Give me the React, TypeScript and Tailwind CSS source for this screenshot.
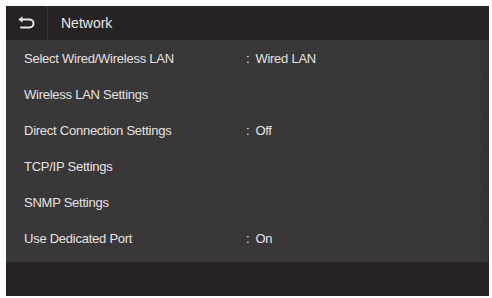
const rows = [
  { label: "Select Wired/Wireless LAN", value: "Wired LAN" },
  { label: "Wireless LAN Settings" },
  { label: "Direct Connection Settings", value: "Off" },
  { label: "TCP/IP Settings" },
  { label: "SNMP Settings" },
  { label: "Use Dedicated Port", value: "On" },
];

function BackIcon() {
  return (
    <svg width="20" height="16" viewBox="0 0 20 16" fill="none">
      <path
        d="M3 4.5h9.5a4 4 0 0 1 0 8H4"
        stroke="#e8e6e6"
        strokeWidth="2"
        strokeLinecap="round"
      />
      <path d="M1.5 4.5L5.5 1.2v6.6z" fill="#e8e6e6" />
    </svg>
  );
}

export default function App() {
  return (
    <div className="h-[298px] w-[492px] bg-white p-[6px] pr-[3px] pb-[2px]">
      <div
        className="flex h-[290px] w-[483px] flex-col bg-[#3a3738] text-[#e4e2e2]"
        style={{ fontFamily: '"Liberation Sans", Arial, sans-serif' }}
      >
        <div className="flex h-[34px] items-center bg-[#272324]">
          <div className="flex h-full w-[42px] items-center justify-center border-r border-[#3a3637]">
            <BackIcon />
          </div>
          <span className="ml-[13px] text-[14px] text-[#e8e6e6]">Network</span>
        </div>
        <div className="flex-1 border-r-[8px] border-[#363334] pt-[1px]">
          {rows.map((row) => (
            <div
              key={row.label}
              className="flex h-[36px] items-center border-b border-[#3d3a3b] pl-[18px] text-[13px] tracking-[-0.25px]"
            >
              <span className="w-[222px]">{row.label}</span>
              {row.value && (
                <span>
                  <span className="mr-[6px]">:</span>
                  {row.value}
                </span>
              )}
            </div>
          ))}
        </div>
        <div className="h-[34px] bg-[#272324]" />
      </div>
    </div>
  );
}
